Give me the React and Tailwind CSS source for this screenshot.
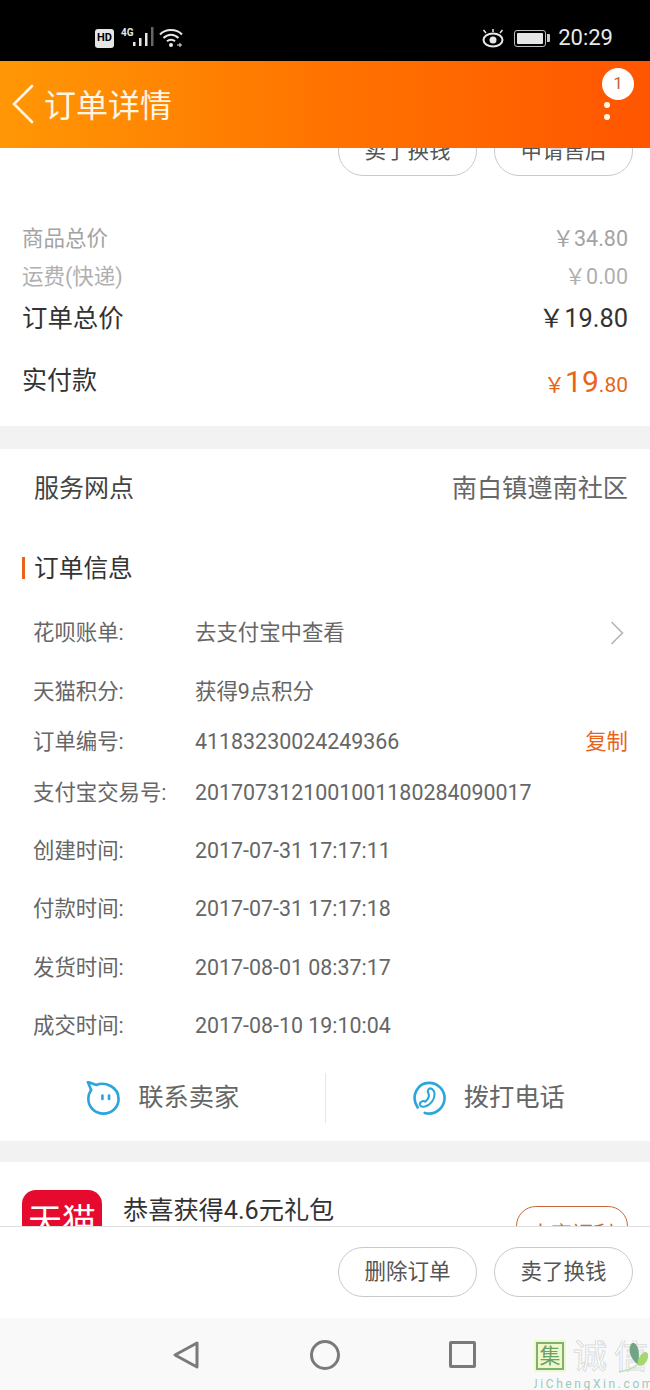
import React from 'react';

const font = 'font-[Roboto,"Noto_Sans_CJK_SC",sans-serif]';

const infoRows = [
  { label: '花呗账单:', value: '去支付宝中查看', h: 'h-[60px]', arrow: true },
  { label: '天猫积分:', value: '获得9点积分', h: 'h-[58px]' },
  { label: '订单编号:', value: '41183230024249366', h: 'h-[42px]', copy: true },
  { label: '支付宝交易号:', value: '2017073121001001180284090017', h: 'h-[60px]' },
  { label: '创建时间:', value: '2017-07-31 17:17:11', h: 'h-[56px]' },
  { label: '付款时间:', value: '2017-07-31 17:17:18', h: 'h-[60px]' },
  { label: '发货时间:', value: '2017-08-01 08:37:17', h: 'h-[58px]' },
  { label: '成交时间:', value: '2017-08-10 19:10:04', h: 'h-[58px]' },
];

const PillButton = ({ children }) => (
  <div className="w-[139px] h-[50px] rounded-full border border-[#c9c9c9] flex items-center justify-center text-[21.5px] text-[#555]">
    {children}
  </div>
);

const StatusBar = () => (
  <div className="h-[61px] bg-black flex items-center justify-between pl-[95px] pr-[37px] pt-[15px] text-[#e8e8e8]">
    <div className="flex items-center">
      <div className="w-[19px] h-[19px] rounded-[3px] bg-[#e6e6e6] text-black text-[11px] font-bold flex items-center justify-center">HD</div>
      <svg width="38" height="20" viewBox="0 0 38 20" className="ml-[5px] mt-[-2px]">
        <text x="2" y="9" fontSize="10" fontWeight="700" fill="#e8e8e8" fontFamily="Roboto">4G</text>
        <rect x="14" y="15" width="2.5" height="4" fill="#e8e8e8" />
        <rect x="20" y="11" width="2.5" height="8" fill="#e8e8e8" />
        <rect x="26" y="6" width="2.5" height="13" fill="#e8e8e8" />
        <rect x="32" y="0" width="2.5" height="19" fill="#666" />
      </svg>
      <svg width="24" height="20" viewBox="0 0 24 20" fill="none" stroke="#e8e8e8" strokeWidth="2" className="ml-[2px] mt-[-1px]">
        <path d="M1 6.5C6.5 0.5 17.5 0.5 23 6.5" />
        <path d="M4.5 10C9 5.5 15 5.5 19.5 10" />
        <path d="M8 13.2C10.2 11.2 13.8 11.2 16 13.2" />
        <circle cx="12" cy="17" r="2" fill="#e8e8e8" stroke="none" />
        <path d="M18 17h5M21 15v4" strokeWidth="1" />
      </svg>
    </div>
    <div className="flex items-center">
      <svg width="22" height="20" viewBox="0 0 22 20" fill="none" stroke="#e8e8e8" strokeWidth="2">
        <ellipse cx="11" cy="12" rx="9.5" ry="6.5" />
        <circle cx="11" cy="12" r="3.5" fill="#e8e8e8" stroke="none" />
        <path d="M4 5L1.5 2M11 4V1M18 5l2.5-3" strokeWidth="1.5" />
      </svg>
      <div className="ml-[10px] w-[32px] h-[17px] rounded-[3px] border border-[#bbb] p-[2px]">
        <div className="w-full h-full bg-[#e6e6e6] rounded-[1px]" />
      </div>
      <div className="ml-[1px] w-[3px] h-[8px] bg-[#ccc] rounded-r-[1px]" />
      <span className="ml-[8px] text-[22px] leading-none">20:29</span>
    </div>
  </div>
);

const Header = () => (
  <div className="relative h-[87px] bg-gradient-to-r from-[#ff9705] via-[#ff7300] to-[#ff5500] flex items-center pl-[12px]">
    <svg width="22" height="40" viewBox="0 0 22 40" fill="none" stroke="#fff6e6" strokeWidth="2.6" strokeLinecap="round" className="mt-[-1px]">
      <path d="M20 2L2 20L20 38" />
    </svg>
    <h1 className="ml-[10px] text-[32px] leading-none text-[#fff6e6] mt-[3px]">订单详情</h1>
    <div className="absolute left-[602px] top-[7px] w-[32px] h-[32px] rounded-full bg-white flex items-center justify-center text-[17px] text-[#c0673a]">1</div>
    <div className="absolute left-[604px] top-[41px] flex flex-col gap-[6px]">
      <div className="w-[6px] h-[6px] rounded-full bg-[#fff6e6]" />
      <div className="w-[6px] h-[6px] rounded-full bg-[#fff6e6]" />
    </div>
  </div>
);

const TotalRow = ({ label, children, className }) => (
  <div className={`flex items-center justify-between ${className}`}>
    <span>{label}</span>
    {children}
  </div>
);

const Totals = () => (
  <div className="bg-white px-[22px] h-[278px] pt-[72px]">
    <TotalRow label="商品总价" className="h-[38px] text-[21.5px] text-[#a3a3a3]">
      <span>￥34.80</span>
    </TotalRow>
    <TotalRow label="运费(快递)" className="h-[38px] text-[21.5px] text-[#b0b0b0]">
      <span>￥0.00</span>
    </TotalRow>
    <TotalRow label="订单总价" className="h-[44px] text-[25.4px] text-[#333]">
      <span>￥19.80</span>
    </TotalRow>
    <TotalRow label="实付款" className="h-[82px] text-[25px] text-[#333]">
      <span className="text-[#e8641b] text-[21px] flex items-baseline">
        ￥<span className="text-[30px]">19</span>.80
      </span>
    </TotalRow>
  </div>
);

const InfoRow = ({ row }) => (
  <div className={`flex items-center pl-[33px] pr-[22px] text-[21.4px] text-[#666] ${row.h}`}>
    <span className="w-[162px]">{row.label}</span>
    <span className="flex-1">{row.value}</span>
    {row.copy && <span className="text-[#e8641b]">复制</span>}
    {row.arrow && (
      <svg width="14" height="24" viewBox="0 0 14 24" fill="none" stroke="#b5b5b5" strokeWidth="1.6" className="mr-[4px]">
        <path d="M1.5 1L12.5 12L1.5 23" />
      </svg>
    )}
  </div>
);

const ChatIcon = () => (
  <svg width="34" height="34" viewBox="0 0 36 36" fill="none" stroke="#2ba6dc" strokeWidth="2.8">
    <path d="M2 1L11 4.2C20 0.5 34.5 6 34.5 19C34.5 28 27 34.5 18.5 34.5C10 34.5 2.5 28 2.5 19C2.5 14.5 4 11.5 5.5 9.5Z" strokeLinejoin="round" />
    <rect x="16" y="14" width="2.8" height="6.5" rx="1.4" fill="#2ba6dc" stroke="none" />
    <rect x="23" y="14" width="2.8" height="6.5" rx="1.4" fill="#2ba6dc" stroke="none" />
  </svg>
);

const PhoneIcon = () => (
  <svg width="34" height="34" viewBox="0 0 36 36" fill="none" stroke="#2ba6dc" strokeWidth="2.8" strokeLinecap="round">
    <path d="M6 28C-2 16 6 2 18 2C28 2 34.5 10 34.5 18C34.5 27 27 34.5 18 34.5C16.5 34.5 15 34.2 13.5 33.8" />
    <path d="M20 8C25 10 25 17 21 22C17 27 10 29 8.5 25.5C7.5 22.5 12 20 14 22C17 19.5 18.5 16 17.5 13C16 12 17 7 20 8Z" strokeWidth="2.2" strokeLinejoin="round" />
  </svg>
);

const Service = () => (
  <div className="bg-white">
    <div className="h-[80px] flex items-center justify-between pl-[34px] pr-[22px]">
      <span className="text-[25px] text-[#444]">服务网点</span>
      <span className="text-[25.2px] text-[#666]">南白镇遵南社区</span>
    </div>
    <div className="h-[78px] flex items-center pl-[22px]">
      <div className="w-[3px] h-[22px] bg-[#e8641b]" />
      <span className="ml-[9px] pt-[2px] text-[24.7px] text-[#333]">订单信息</span>
    </div>
    <div className="mt-[-4px]">
      {infoRows.map((row) => <InfoRow key={row.label} row={row} />)}
    </div>
    <div className="flex items-center h-[86px]">
      <div className="flex-1 flex items-center justify-center gap-[18px] pl-[1px]">
        <ChatIcon />
        <span className="text-[25.3px] text-[#666]">联系卖家</span>
      </div>
      <div className="w-px h-[50px] bg-[#e6e6e6]" />
      <div className="flex-1 flex items-center justify-center gap-[18px] pl-[1px]">
        <PhoneIcon />
        <span className="text-[25.3px] text-[#666]">拨打电话</span>
      </div>
    </div>
  </div>
);

const Gift = () => (
  <div className="bg-white flex items-start pt-[28px] px-[22px] h-[100px]">
    <div className="w-[80px] h-[80px] rounded-[14px] bg-[#e60a2f] text-white text-[34px] leading-none flex justify-center pt-[14px] shrink-0">天猫</div>
    <span className="ml-[21px] mt-[5px] text-[25.2px] leading-[32px] text-[#333]">恭喜获得4.6元礼包</span>
    <div className="ml-auto mt-[16px] w-[112px] h-[50px] rounded-[20px] border border-[#c8693a] text-[21px] text-[#c8693a] flex justify-center pt-[12px]">去变福利</div>
  </div>
);

const Watermark = () => (
  <div className="absolute left-[534px] top-[1340px] w-[116px] h-[50px] overflow-hidden">
    <div className="flex items-start">
      <div className="w-[32px] h-[32px] bg-[#eef9c8] flex items-center justify-center">
        <div className="w-[28px] h-[28px] border-2 border-[#7fae7a] text-[#6ca06a] text-[21px] leading-none flex items-center justify-center">集</div>
      </div>
      <span className="ml-[7px] text-[34px] leading-[32px] text-white [-webkit-text-stroke:1px_#dcdcdc]">诚</span>
      <span className="ml-[7px] text-[34px] leading-[32px] text-white [-webkit-text-stroke:1px_#dcdcdc]">信</span>
    </div>
    <div className="mt-[6px] ml-[-3px] text-[12px] leading-[12px] tracking-[2.6px] text-[#9cc9bb] whitespace-nowrap">JiChengXin.com</div>
    <svg width="32" height="34" viewBox="0 0 32 34" className="absolute left-[84px] top-0">
      <path d="M19 24C12 18 9 8 14 3C18 2 23 8 20 24Z" fill="#6fa583" />
      <path d="M19 25C21 14 27 9 30 14C31 21 25 28 19 25Z" fill="#a6d86f" />
      <path d="M19 25C15 28 8 31 1 32" stroke="#b9dfb0" strokeWidth="1.5" fill="none" />
    </svg>
  </div>
);

const NavBar = () => (
  <div className="h-[72px] bg-[#f9f9fa] flex items-center pl-[172px] pt-[2px] pb-[1px]">
    <svg width="28" height="30" viewBox="0 0 28 30" fill="none" stroke="#7a7a7a" strokeWidth="3" strokeLinejoin="round">
      <path d="M25 3V27L3 15Z" />
    </svg>
    <svg width="30" height="30" viewBox="0 0 30 30" fill="none" stroke="#7a7a7a" strokeWidth="3" className="ml-[110px]">
      <circle cx="15" cy="15" r="13.5" />
    </svg>
    <div className="ml-[109px] w-[27px] h-[27px] rounded-[2px] border-[3px] border-[#7a7a7a]" />
  </div>
);

export default function App() {
  return (
    <div className={`relative w-[650px] h-[1390px] overflow-hidden bg-white ${font}`}>
      <StatusBar />
      <Header />
      <div className="h-[1078px] overflow-hidden bg-[#f2f2f2]">
        {/* кнопки уходят под шапку, поэтому сдвинуты вверх */}
        <div className="relative">
          <Totals />
          <div className="absolute left-[338px] top-[-22px] flex gap-[17px]">
            <PillButton>卖了换钱</PillButton>
            <PillButton>申请售后</PillButton>
          </div>
        </div>
        <div className="h-[23px]" />
        <Service />
        <div className="h-[21px]" />
        <Gift />
      </div>
      <div className="h-[92px] bg-white border-t border-[#dedede] flex justify-end items-start gap-[17px] pt-[20px] pr-[17px]">
        <PillButton>删除订单</PillButton>
        <PillButton>卖了换钱</PillButton>
      </div>
      <NavBar />
      <Watermark />
    </div>
  );
}
